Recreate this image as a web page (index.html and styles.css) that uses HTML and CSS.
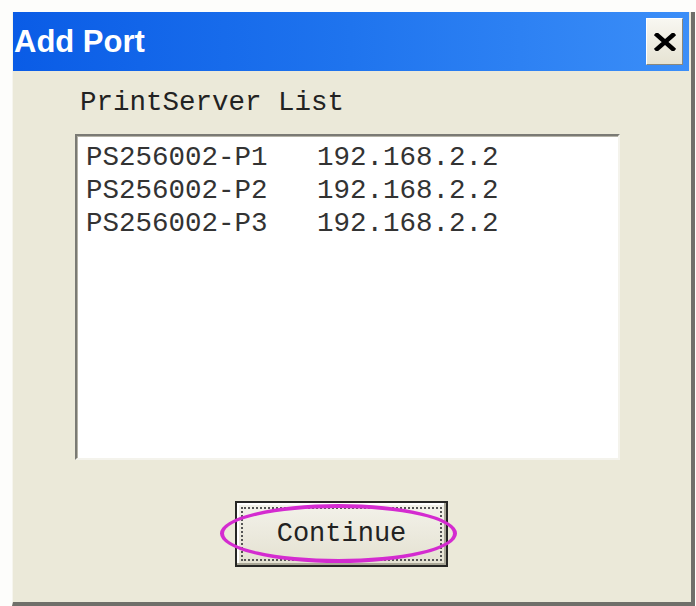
FILE: index.html
```html
<!DOCTYPE html>
<html lang="en">
<head>
    <meta charset="UTF-8">
    <title>Add Port</title>
    <link rel="stylesheet" href="styles.css">
</head>
<body>
<div class="window">
    <div class="titlebar">
        <span class="title">Add Port</span>
        <button class="close" aria-label="Close">
            <svg width="22" height="18" viewBox="0 0 22 18">
                <path d="M3 2 L19 16 M19 2 L3 16" stroke="#000" stroke-width="4.5" stroke-linecap="square"/>
            </svg>
        </button>
    </div>

    <div class="content">
        <div class="label">PrintServer List</div>

        <!-- Print server list -->
        <div class="listbox">
            <div class="row">PS256002-P1   192.168.2.2</div>
            <div class="row">PS256002-P2   192.168.2.2</div>
            <div class="row">PS256002-P3   192.168.2.2</div>
        </div>

        <div class="actions">
            <button class="btn"><span class="focus">Continue</span></button>
            <div class="mark"></div>
        </div>
    </div>
</div>
</body>
</html>
```

FILE: styles.css
```css
body {
    margin: 0;
    background-color: #fdfdfb;
    font-family: "Liberation Mono", "Courier New", monospace;
}

.window {
    margin: 12px 0 0 12px;
    width: 678px;
    height: 590px;
    background-color: #ebe9d9;
    border-left: 1px solid #f6f5ee;
    border-right: 4px solid #6f6f6a;
    border-bottom: 4px solid #6f6f6a;
}

.titlebar {
    height: 59px;
    margin-right: 2px;
    display: flex;
    align-items: center;
    justify-content: space-between;
    background: linear-gradient(to right, #0a5ce6, #1f74ee 50%, #3b8ef8);
}

.title {
    padding-left: 1px;
    font-family: "Liberation Sans", Arial, sans-serif;
    font-weight: bold;
    font-size: 31px;
    line-height: 59px;
    color: #fff;
}

.close {
    width: 37px;
    height: 47px;
    margin-right: 6px;
    padding: 0;
    display: flex;
    align-items: center;
    justify-content: center;
    background: linear-gradient(#f8f7f1, #e6e3d3);
    border: 1px solid;
    border-color: #fff #8a887c #8a887c #fff;
}

.content {
    padding: 16px 0 0 62px;
}

.label {
    padding-left: 5px;
    font-size: 27.5px;
    line-height: 32px;
    color: #222;
}

.listbox {
    margin-top: 15px;
    width: 545px;
    height: 326px;
    padding: 5px 0 0 9px;
    box-sizing: border-box;
    background-color: #fff;
    border: 2px solid;
    border-color: #7a7a74 #f4f3ec #f4f3ec #7a7a74;
    box-shadow: inset 1px 1px 0 #b5b3a8;
}

.row {
    white-space: pre;
    font-size: 27.5px;
    line-height: 33px;
    color: #333;
}

.actions {
    position: relative;
    margin: 41px 0 0 160px;
    width: 213px;
}

.btn {
    width: 213px;
    height: 66px;
    padding: 4px;
    display: flex;
    background: linear-gradient(#f3f2ea, #e4e1d1);
    border: 2px solid #262624;
    box-shadow: inset -2px -2px 0 #a9a797, inset 2px 2px 0 #fff;
    cursor: pointer;
}

.focus {
    flex: 1;
    display: flex;
    align-items: center;
    justify-content: center;
    border: 2px dotted #555;
    font-family: "Liberation Mono", "Courier New", monospace;
    font-size: 27px;
    color: #222;
}

.mark {
    position: absolute;
    left: -15px;
    top: 3px;
    width: 237px;
    height: 59px;
    box-sizing: border-box;
    border: 4px solid #d42bd0;
    border-radius: 50%;
    pointer-events: none;
}
```
